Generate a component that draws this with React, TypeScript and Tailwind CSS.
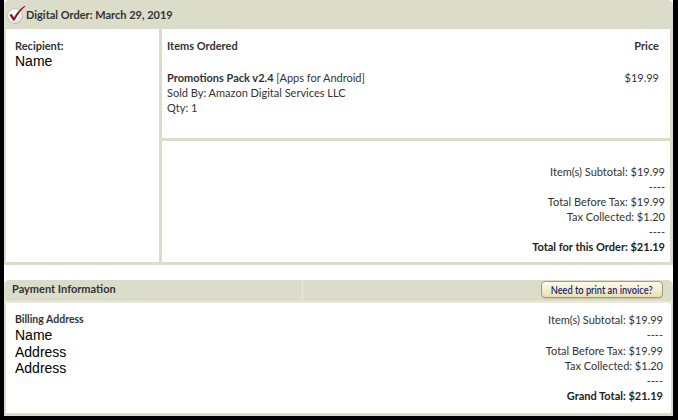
import React from "react";

const tan = "bg-[#dcdccb]";

function CheckIcon() {
  return (
    <svg width="20" height="20" viewBox="0 0 20 20" className="shrink-0">
      <defs>
        <radialGradient id="cg" cx="0.4" cy="0.35" r="0.7">
          <stop offset="0" stopColor="#ffffff" />
          <stop offset="0.7" stopColor="#f2f2f2" />
          <stop offset="1" stopColor="#c8c8c8" />
        </radialGradient>
      </defs>
      <circle cx="9" cy="12" r="7.5" fill="url(#cg)" stroke="#b9b9b9" strokeWidth="0.8" />
      <path d="M3.4 11 L5.6 9.8 L8 13.6 C10.6 8.8 14 4.8 18.6 1.8 L19.2 2.6 C14.8 6.4 11.6 10.8 8.6 16.6 L7.4 16.8 Z" fill="#8e1520" />
    </svg>
  );
}

function Line({ children, bold = false }: { children: React.ReactNode; bold?: boolean }) {
  return <div className={bold ? "font-bold text-[#222]" : ""}>{children}</div>;
}

export default function App() {
  return (
    <div
      className="w-[678px] h-[420px] bg-black overflow-hidden text-[#333] text-[11px] leading-[15px]"
      style={{ fontFamily: "Lato, 'Open Sans', sans-serif" }}
    >
      <div className="ml-[4px] w-[669px] h-[416px] bg-white flex flex-col">
        {/* Order header */}
        <div className={`h-[29px] ${tan} rounded-t-[5px] flex items-center pl-[2px] pb-[1px]`}>
          <CheckIcon />
          <span className="font-bold text-[11px] text-[#333]">Digital Order: March 29, 2019</span>
        </div>

        {/* Order body */}
        <div className={`flex ${tan} pl-[2px] pr-[3px] pb-[3px] gap-[3px] h-[236px]`}>
          <div className="w-[153px] bg-white pl-[9px] pt-[9px]">
            <div className="font-bold">Recipient:</div>
            <div className="text-[14px] leading-[16px] text-black" style={{ fontFamily: "'Liberation Sans', Arial, sans-serif" }}>
              Name
            </div>
          </div>
          <div className="flex-1 flex flex-col gap-[3px]">
            <div className="h-[109px] bg-white pl-[5px] pr-[11px] pt-[9px]">
              <div className="flex justify-between font-bold">
                <span>Items Ordered</span>
                <span>Price</span>
              </div>
              <div className="flex justify-between mt-[17px]">
                <div>
                  <div>
                    <span className="font-bold">Promotions Pack v2.4</span> [Apps for Android]
                  </div>
                  <div>Sold By: Amazon Digital Services LLC</div>
                  <div>Qty: 1</div>
                </div>
                <div>$19.99</div>
              </div>
            </div>
            <div className="flex-1 bg-white pr-[5px] pt-[23px] text-right">
              <Line>Item(s) Subtotal: $19.99</Line>
              <Line>----</Line>
              <Line>Total Before Tax: $19.99</Line>
              <Line>Tax Collected: $1.20</Line>
              <Line>----</Line>
              <Line bold>Total for this Order: $21.19</Line>
            </div>
          </div>
        </div>

        {/* Payment */}
        <div className="mt-[15px] flex flex-col flex-1">
          <div className={`h-[23px] ${tan} rounded-t-[5px] flex border-b-[2px] border-[#e8e8dc]`}>
            <div className="w-[299px] border-r border-[#e8e8dc] pl-[8px] pt-[1px] font-bold">Payment Information</div>
            <div className="flex-1 flex justify-end items-start pr-[10px] pt-[1px]">
              <button
                className="h-[17px] w-[122px] rounded-[4px] border border-[#a29d80] bg-gradient-to-b from-[#fdfbe8] to-[#e8e0b4] text-[#1d2673] text-[11px] leading-[14px] flex items-center justify-center shadow-[0_1px_0_#c9c5a8]"
              >
                <span className="inline-block scale-x-[0.84] whitespace-nowrap font-semibold">Need to print an invoice?</span>
              </button>
            </div>
          </div>
          <div className="flex-1 flex justify-between border-l-[2px] border-r-[2px] border-b-[3px] border-[#dcdccb] pl-[9px] pr-[8px] pt-[9px]">
            <div>
              <div className="font-bold text-[10.5px]">Billing Address</div>
              <div className="text-[14px] leading-[16.5px] text-black" style={{ fontFamily: "'Liberation Sans', Arial, sans-serif" }}>
                <div>Name</div>
                <div>Address</div>
                <div>Address</div>
              </div>
            </div>
            <div className="text-right leading-[15.3px]">
              <Line>Item(s) Subtotal: $19.99</Line>
              <Line>----</Line>
              <Line>Total Before Tax: $19.99</Line>
              <Line>Tax Collected: $1.20</Line>
              <Line>----</Line>
              <Line bold>Grand Total: $21.19</Line>
            </div>
          </div>
        </div>
      </div>
    </div>
  );
}
